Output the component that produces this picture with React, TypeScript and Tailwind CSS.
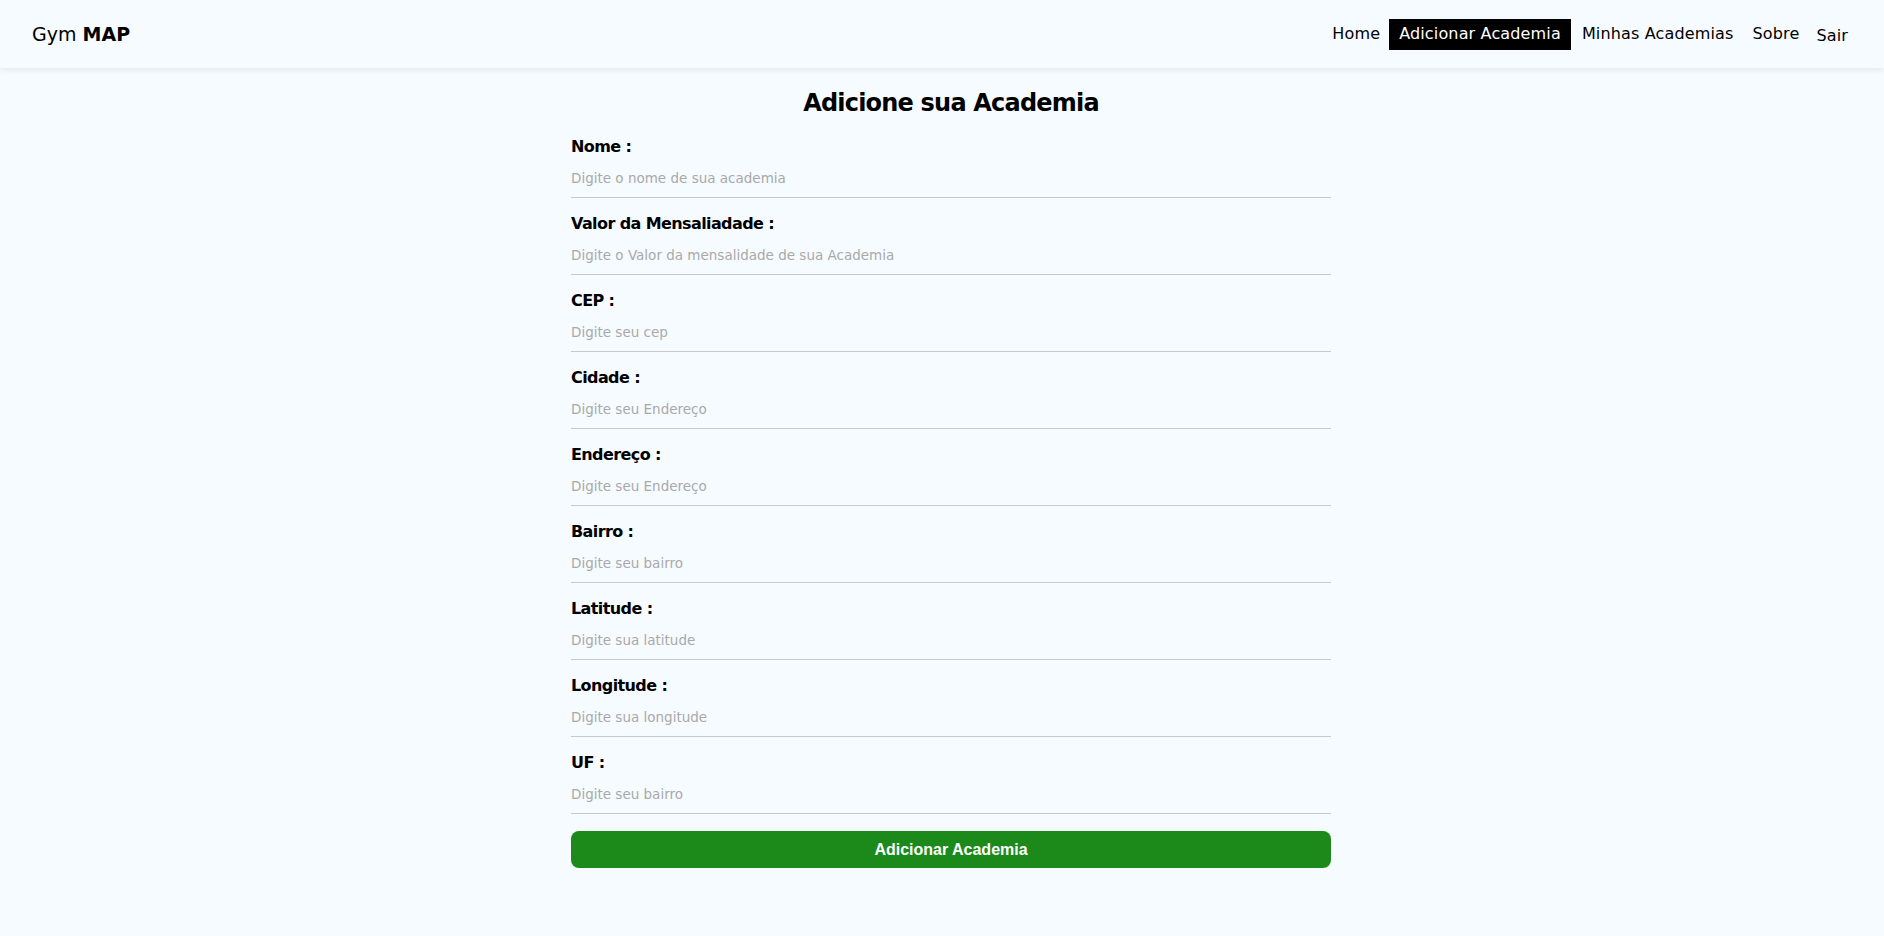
import React from "react";

const fields = [
  { label: "Nome :", ph: "Digite o nome de sua academia" },
  { label: "Valor da Mensaliadade :", ph: "Digite o Valor da mensalidade de sua Academia" },
  { label: "CEP :", ph: "Digite seu cep" },
  { label: "Cidade :", ph: "Digite seu Endereço" },
  { label: "Endereço :", ph: "Digite seu Endereço" },
  { label: "Bairro :", ph: "Digite seu bairro" },
  { label: "Latitude :", ph: "Digite sua latitude" },
  { label: "Longitude :", ph: "Digite sua longitude" },
  { label: "UF :", ph: "Digite seu bairro" },
];

export default function App() {
  return (
    <div
      className="min-h-[936px] w-full bg-[#f6fbff] text-black"
      style={{ fontFamily: '"DejaVu Sans", "Open Sans", sans-serif' }}
    >
      <header className="flex h-[68px] items-center justify-between bg-[#f6fbff] pl-[32px] pr-[36px] shadow-[0_2px_6px_rgba(0,0,0,0.08)]">
        <div className="text-[19px] leading-none">
          Gym <span className="font-extrabold">MAP</span>
        </div>
        <nav className="flex items-center text-[16px] tracking-[0.15px]">
          <a className="mr-[9px]">Home</a>
          <a className="flex h-[31px] items-center bg-black px-[10px] text-white">Adicionar Academia</a>
          <a className="ml-[11px]">Minhas Academias</a>
          <a className="ml-[19px]">Sobre</a>
          <a className="ml-[17px] mt-[3px]">Sair</a>
        </nav>
      </header>
      <main className="flex justify-center pl-[18px] pt-[19px]">
        <div className="w-[760px]">
          <h1 className="h-[32px] text-center text-[24px] font-bold leading-[32px] tracking-[-0.8px]">
            Adicione sua Academia
          </h1>
          <div className="mt-[16px]">
            {fields.map((f, i) => (
              <div key={i} className="mb-[14px]">
                <label className="block h-6 text-[16px] font-bold leading-6 tracking-[-0.6px]">{f.label}</label>
                <input
                  className="block h-[39px] w-full border-b border-[#c9c9c9] bg-transparent text-[13.5px] outline-none placeholder:text-[#a9a9a9]"
                  placeholder={f.ph}
                />
              </div>
            ))}
          </div>
          <button
            className="mt-[3px] h-[37px] w-full rounded-[8px] bg-[#1b8a1b] text-[16px] font-bold text-white"
            style={{ fontFamily: '"Liberation Sans", Arial, sans-serif' }}
          >
            Adicionar Academia
          </button>
        </div>
      </main>
    </div>
  );
}
